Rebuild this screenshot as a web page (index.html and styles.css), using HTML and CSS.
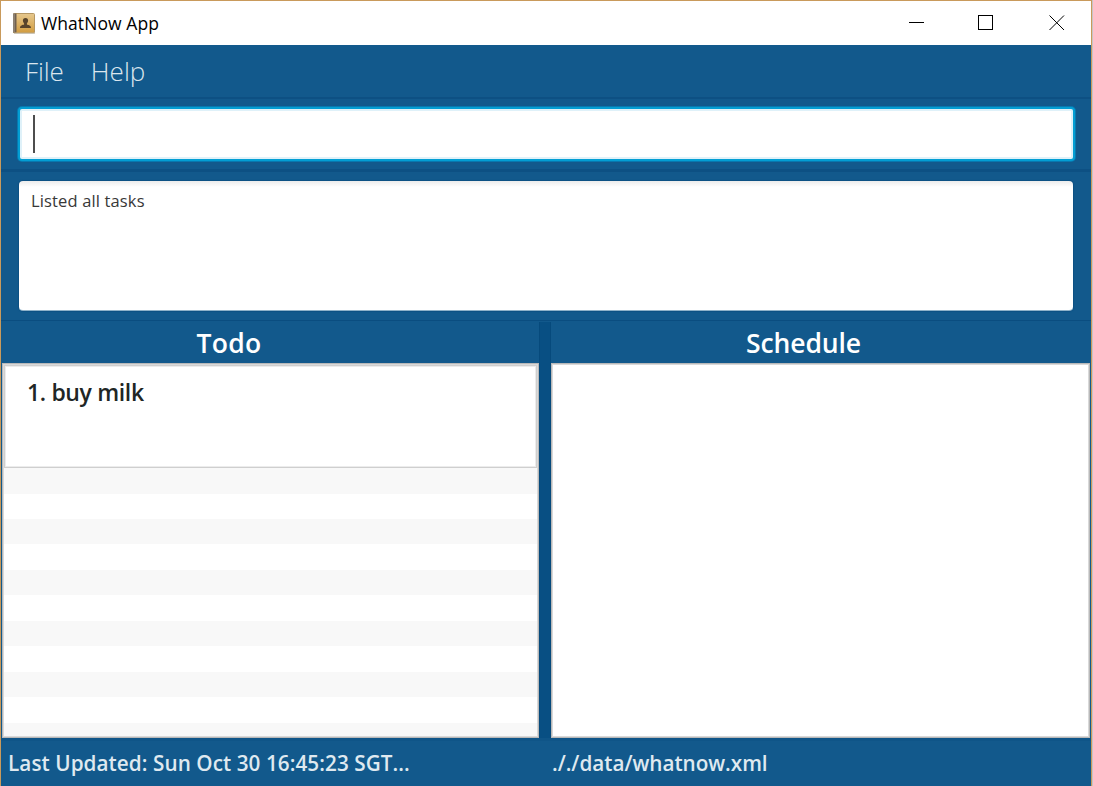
FILE: index.html
```html
<!DOCTYPE html>
<html lang="en">
<head>
<meta charset="utf-8">
<title>WhatNow App</title>
<link rel="stylesheet" href="styles.css">
</head>
<body>
<div class="window">
  <header class="titlebar">
    <svg class="app-icon" width="22" height="21" viewBox="0 0 22 21">
      <defs><linearGradient id="cover" x1="0" y1="0" x2="0" y2="1"><stop offset="0" stop-color="#e6c88e"/><stop offset="1" stop-color="#d29c3f"/></linearGradient></defs>
      <rect x="0.5" y="0.5" width="21" height="19.5" rx="1" fill="url(#cover)" stroke="#b59763"/>
      <path d="M0 0.5h3.5v19H0z" fill="#70604f"/>
      <path d="M1 1v18" stroke="#a8a095"/>
      <path d="M1 20.3h21" stroke="#c9c3b8"/>
      <path d="M12.500 5c-1.800 0-2.700 1.100-2.600 2.800.1 1.300.6 2 1.200 2.600v1.200c-1.300.5-4.100.8-4.100 3.400h11c0-2.600-2.800-2.900-4.100-3.400v-1.200c.6-.6 1.100-1.300 1.200-2.600.1-1.700-.8-2.800-2.600-2.800z" fill="#57432b"/>
    </svg>
    <span class="app-name">WhatNow App</span>
    <svg class="controls" width="180" height="44" viewBox="0 0 180 44" fill="none" stroke="#000" shape-rendering="crispEdges">
      <path d="M0 21.5h15M69.500 14.500h14v14h-14z"/>
      <path d="M140.500 14.500l14.500 14.500M155 14.500l-14.500 14.500" shape-rendering="auto"/>
    </svg>
  </header>
  <nav class="menu"><span class="menu-file">File</span><span class="menu-help">Help</span></nav>
  <section class="command"><div class="command-field"><i class="caret"></i></div></section>
  <section class="result"><div class="result-box"><span class="result-text">Listed all tasks</span></div></section>
  <main class="panes">
    <section class="pane">
      <h2><span class="todo">Todo</span></h2>
      <div class="list todo-list">
        <div class="card"><span class="task">1. buy milk</span></div>
        <div class="stripes"></div>
      </div>
    </section>
    <div class="divider"></div>
    <section class="pane">
      <h2><span class="schedule">Schedule</span></h2>
      <div class="list"></div>
    </section>
  </main>
  <footer class="status"><div><span class="updated">Last Updated: Sun Oct 30 16:45:23 SGT...</span></div><div><span class="path">././data/whatnow.xml</span></div></footer>
</div>
<div class="edge"></div>
</body>
</html>
```
FILE: styles.css
```css
* { box-sizing: border-box; }
body { margin: 0; width: 1093px; height: 786px; display: flex; overflow: hidden; background: #fff; font-family: "Open Sans", "Noto Sans", sans-serif; }
.window { width: 1092px; height: 786px; display: flex; flex-direction: column; background: #12598c; border: 1px solid #c99a5b; border-bottom: 0; }
.edge { width: 1px; background: #c5c5c5; }
span { white-space: nowrap; }
.titlebar { height: 44px; flex: none; background: #fff; display: flex; align-items: center; padding-left: 12px; }
.app-icon { flex: none; }
.app-name { margin-left: 6px; font-size: 17.5px; letter-spacing: 0.08px; color: #000; line-height: 44px; }
.controls { margin-left: auto; margin-right: 2px; }
.menu { height: 54px; flex: none; border-bottom: 2px solid #0d5083; padding-left: 24px; display: flex; font-size: 26px; font-weight: 300; line-height: 53px; color: #dbe6ee; }
.menu-file { letter-spacing: -0.1px; }
.menu-help { margin-left: 27px; letter-spacing: 0.1px; }
.command { height: 73px; flex: none; padding: 8px 16px 0 17px; border-bottom: 3px solid #0d5083; }
.command-field { height: 54px; border: 2px solid #039ed3; border-radius: 4px; background: #fff; box-shadow: inset 0 0 0 2px #dff1f9, 0 0 0 1px #0878af; padding: 6px 0 0 13px; }
.caret { display: block; width: 2px; height: 38px; background: #4d4d4d; }
.result { height: 149px; flex: none; padding: 9px 18px 0 18px; border-bottom: 1px solid #0a4d80; }
.result-box { height: 130px; background: linear-gradient(#ececec, #fff 6px); border-radius: 4px; border-bottom: 1px solid #8fb2c9; box-shadow: 0 0 1px 1px #0d5083; padding-left: 12px; font-size: 16.5px; letter-spacing: 0.14px; line-height: 40px; color: #383838; }
.panes { height: 417px; flex: none; display: grid; grid-template-columns: 537px 12px 539px; padding-left: 1px; }
.pane { display: flex; flex-direction: column; }
h2 { margin: 0; height: 42px; font-size: 26.5px; font-weight: 600; line-height: 45px; color: #fff; }
.todo { margin-left: 194.5px; letter-spacing: 0.3px; }
.schedule { margin-left: 195px; letter-spacing: -0.1px; }
.list { height: 375px; background: #fff; border: 1px solid #b9b9b9; box-shadow: inset 0 0 0 1px #d9d9d9; }
.divider { background: #084f83; border: solid #064a7c; border-width: 0 1px; margin-top: 1px; }
.todo-list { padding: 1px; display: flex; flex-direction: column; }
.card { height: 103px; flex: none; border: 1px solid #cfcfcf; background: #fff; padding-left: 22px; font-size: 23px; letter-spacing: -0.35px; font-weight: 600; line-height: 53px; color: #212625; box-shadow: inset 0 0 0 1px #ececec; }
.stripes { flex: 1; background: repeating-linear-gradient(#f8f8f8 0 25.5px, #fff 25.5px 51px); }
.status { height: 48px; flex: none; border-top: 3px solid #0f5588; display: grid; grid-template-columns: 544px 1fr; padding-left: 7px; font-size: 20.7px; font-weight: 600; line-height: 45px; color: #dfe9f0; }
.updated { letter-spacing: 0.07px; }
.path { letter-spacing: -0.02px; }
```
